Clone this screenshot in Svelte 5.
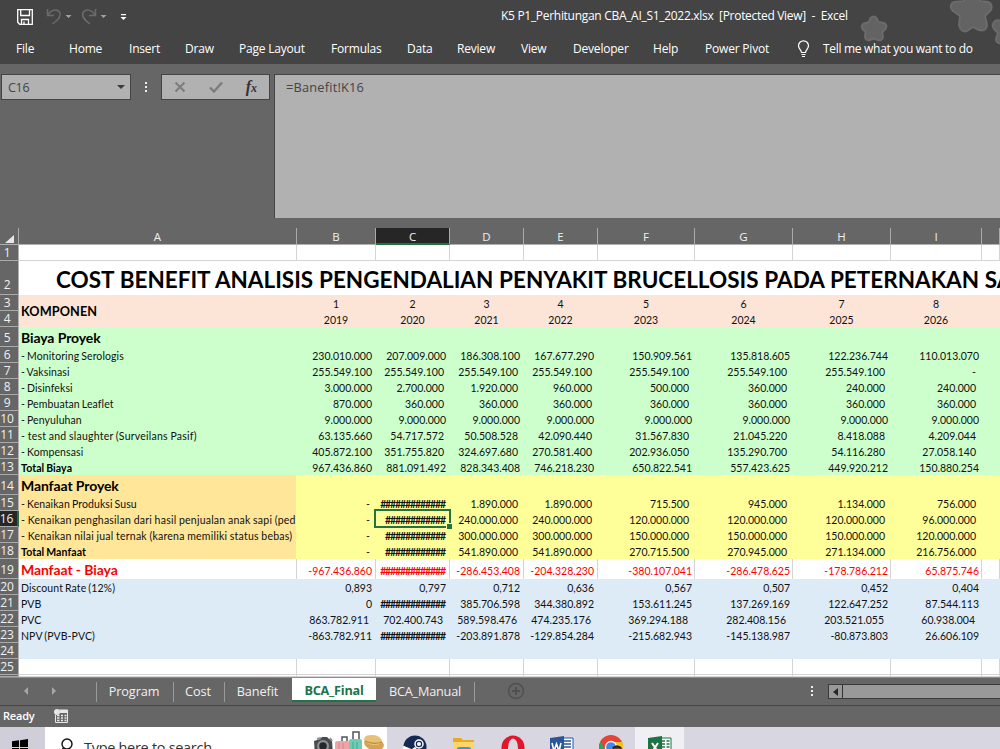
<script>
  const menu = [
    { label: 'File', width: 53 },
    { label: 'Home', width: 60 },
    { label: 'Insert', width: 56 },
    { label: 'Draw', width: 54 },
    { label: 'Page Layout', width: 92 },
    { label: 'Formulas', width: 76 },
    { label: 'Data', width: 50 },
    { label: 'Review', width: 64 },
    { label: 'View', width: 52 },
    { label: 'Developer', width: 80 },
    { label: 'Help', width: 52 },
    { label: 'Power Pivot', width: 92 },
  ];

  const columns = ['A', 'B', 'C', 'D', 'E', 'F', 'G', 'H', 'I', ''];
  const hash = '#############';
  const hash12 = '############';

  // a trailing space in a value is the blank the accounting format leaves at the right
  const rows = [
    { n: 1, h: 16, kind: 'blank' },
    { n: 2, h: 34, kind: 'title', title: 'COST BENEFIT ANALISIS PENGENDALIAN PENYAKIT BRUCELLOSIS PADA PETERNAKAN SAPI' },
    { n: 3, h: 16, kind: 'years', label: 'KOMPONEN', cells: ['1', '2', '3', '4', '5', '6', '7', '8'] },
    { n: 4, h: 16, kind: 'years', cells: ['2019', '2020', '2021', '2022', '2023', '2024', '2025', '2026'] },
    { n: 5, h: 20, kind: 'cost heading', label: 'Biaya Proyek' },
    { n: 6, h: 16, kind: 'cost', label: '- Monitoring Serologis', cells: ['230.010.000', '207.009.000', '186.308.100', '167.677.290', '150.909.561', '135.818.605', '122.236.744', '110.013.070'] },
    { n: 7, h: 16, kind: 'cost', label: '- Vaksinasi', cells: ['255.549.100', '255.549.100 ', '255.549.100 ', '255.549.100 ', '255.549.100 ', '255.549.100 ', '255.549.100 ', '- '] },
    { n: 8, h: 16, kind: 'cost', label: '- Disinfeksi', cells: ['3.000.000', '2.700.000 ', '1.920.000 ', '960.000 ', '500.000 ', '360.000 ', '240.000 ', '240.000 '] },
    { n: 9, h: 16, kind: 'cost', label: '- Pembuatan Leaflet', cells: ['870.000', '360.000 ', '360.000 ', '360.000 ', '360.000 ', '360.000 ', '360.000 ', '360.000 '] },
    { n: 10, h: 16, kind: 'cost', label: '- Penyuluhan', cells: ['9.000.000', '9.000.000', '9.000.000', '9.000.000', '9.000.000', '9.000.000', '9.000.000', '9.000.000'] },
    { n: 11, h: 16, kind: 'cost wide', label: '- test and slaughter (Surveilans Pasif)', cells: ['63.135.660', '54.717.572 ', '50.508.528 ', '42.090.440 ', '31.567.830 ', '21.045.220 ', '8.418.088 ', '4.209.044 '] },
    { n: 12, h: 16, kind: 'cost', label: '- Kompensasi', cells: ['405.872.100', '351.755.820 ', '324.697.680 ', '270.581.400 ', '202.936.050 ', '135.290.700 ', '54.116.280 ', '27.058.140 '] },
    { n: 13, h: 16, kind: 'cost total', label: 'Total Biaya', cells: ['967.436.860', '881.091.492', '828.343.408', '746.218.230', '650.822.541', '557.423.625', '449.920.212', '150.880.254'] },
    { n: 14, h: 20, kind: 'benefit heading', label: 'Manfaat Proyek' },
    { n: 15, h: 16, kind: 'benefit', label: '- Kenaikan Produksi Susu', cells: ['- ', hash, '1.890.000 ', '1.890.000 ', '715.500 ', '945.000 ', '1.134.000 ', '756.000 '] },
    { n: 16, h: 16, kind: 'benefit wide', label: '- Kenaikan penghasilan dari hasil penjualan anak sapi (ped', cells: ['- ', hash12, '240.000.000 ', '240.000.000 ', '120.000.000 ', '120.000.000 ', '120.000.000 ', '96.000.000 '] },
    { n: 17, h: 16, kind: 'benefit wide', label: '- Kenaikan nilai jual ternak (karena memiliki status bebas)', cells: ['- ', hash12, '300.000.000 ', '300.000.000 ', '150.000.000 ', '150.000.000 ', '150.000.000 ', '120.000.000 '] },
    { n: 18, h: 16, kind: 'benefit total', label: 'Total Manfaat', cells: ['- ', hash12, '541.890.000 ', '541.890.000 ', '270.715.500 ', '270.945.000 ', '271.134.000 ', '216.756.000 '] },
    { n: 19, h: 20, kind: 'net heading', label: 'Manfaat - Biaya', cells: ['-967.436.860', hash, '-286.453.408', '-204.328.230', '-380.107.041', '-286.478.625', '-178.786.212', '65.875.746'] },
    { n: 20, h: 16, kind: 'present', label: 'Discount Rate (12%)', cells: ['0,893', '0,797', '0,712', '0,636', '0,567', '0,507', '0,452', '0,404'] },
    { n: 21, h: 16, kind: 'present', label: 'PVB', cells: ['0', hash, '385.706.598', '344.380.892', '153.611.245', '137.269.169', '122.647.252', '87.544.113'] },
    { n: 22, h: 16, kind: 'present indent', label: 'PVC', cells: ['863.782.911', '702.400.743', '589.598.476', '474.235.176', '369.294.188', '282.408.156', '203.521.055', '60.938.004'] },
    { n: 23, h: 16, kind: 'present', label: 'NPV (PVB-PVC)', cells: ['-863.782.911', hash, '-203.891.878', '-129.854.284', '-215.682.943', '-145.138.987', '-80.873.803', '26.606.109'] },
    { n: 24, h: 16, kind: 'present' },
    { n: 25, h: 16, kind: 'blank' },
    { n: '', h: 2, kind: 'blank' },
  ];

  const sheets = [
    { label: 'Program', width: 77 },
    { label: 'Cost', width: 51 },
    { label: 'Banefit', width: 67 },
    { label: 'BCA_Final', width: 84 },
    { label: 'BCA_Manual', width: 99 },
  ];

  let activeSheet = $state('BCA_Final');
  let selected = $state({ row: 16, col: 2 });
</script>

<div class="window">
  <header>
    <svg class="stars" width="150" height="64" viewBox="850 0 150 64">
      <g fill="#636363" stroke="#6b6b6b" stroke-width="2" stroke-linejoin="round">
        <path d="M870.500 18Q874 15 876.500 18L878.500 22L884 23Q888 25 885.500 29L882.500 32L883 37Q882 41 878 40L874 38.500L870 40Q865.500 41 865 37L865.500 32L862.500 29Q860.500 25 864 23.500L869 22Z" />
        <path d="M963 -6L964 1L954 2Q948 5 953 11L960 16L959 25Q961 33 967 31L973 27L979 30Q986 32 987 25L985 16L991 10Q993 4 988 2L980 1L977 -6Z" />
        <path d="M1003 22Q999 19 995 21Q991 24 994 29L998 33L996 39Q996 44 1004 44Z" />
      </g>
    </svg>
    <div class="titlebar">
      <svg width="135" height="26" viewBox="0 0 135 26" fill="none">
        <path d="M17.700 9.700H32.300V24.300H19.700L17.700 22.300ZM20.700 9.700V15.500H29.500V9.700M21.500 24V19.500H28.500V24M24 21.500V24" stroke="#fff" stroke-width="1.300" />
        <path d="M47.500 9V15.500H54M48 15C51 9.500 57 8.500 59.500 12C62 16 59 19.500 52.500 24" stroke="#6b6b6b" stroke-width="1.500" />
        <path d="M95.500 9V15.500H89M95 15C92 9.500 86 8.500 83.500 12C81 16 84 19.500 90 24" stroke="#6b6b6b" stroke-width="1.500" />
        <path d="M65.500 15h6l-3 3zM100.500 15h6l-3 3z" fill="#a0a0a0" />
        <path d="M121 14h5v1.300h-5zM120.500 17h6l-3 3z" fill="#fff" />
      </svg>
      <span class="filename">K5 P1_Perhitungan CBA_AI_S1_2022.xlsx&nbsp; [Protected View]&nbsp; -&nbsp; Excel</span>
    </div>
    <nav>
      {#each menu as item}
        <span style="width: {item.width}px">{item.label}</span>
      {/each}
      <svg width="26" height="18" viewBox="0 0 26 18" fill="none" stroke="#fff" stroke-width="1.200">
        <path d="M4.500 12.500C4.500 10 1.500 9 1.500 5.800A5 5 0 0 1 11.500 5.800C11.500 9 8.500 10 8.500 12.500ZM4.500 14.500H8.500M5 16.500H8" />
      </svg>
      <span class="tell">Tell me what you want to do</span>
    </nav>
  </header>

  <section class="formula">
    <div class="namebox">
      <span>C16</span>
      <svg width="8" height="4" viewBox="0 0 8 4"><path d="M0 0h8l-4 4z" fill="#3b3b3b" /></svg>
    </div>
    <div class="dots"><i></i><i></i><i></i></div>
    <div class="tools">
      <svg width="14" height="14" viewBox="0 0 14 14" fill="none" stroke="#7c7c7c" stroke-width="2"><path d="M2.500 2.500L11.500 11.500M11.500 2.500L2.500 11.500" /></svg>
      <svg width="14" height="14" viewBox="0 0 14 14" fill="none" stroke="#7c7c7c" stroke-width="2.400"><path d="M1 7.500L5 11.500L13 2.500" /></svg>
      <em>f<small>x</small></em>
    </div>
    <div class="expression">=Banefit!K16</div>
  </section>

  <section class="sheet">
    <div class="line letters">
      <div class="corner"><svg width="10" height="9" viewBox="0 0 10 9"><path d="M9 0V8H0z" fill="#e8e8e8" /></svg></div>
      {#each columns as letter, i}
        <div class="letter" class:current={i === selected.col}>{letter}</div>
      {/each}
    </div>
    {#each rows as row}
      <div class="line {row.kind}" style="height: {row.h}px">
        <div class="number" class:current={row.n === selected.row}>{row.n}</div>
        {#if row.title}
          <div class="bigtitle">{row.title}</div>
        {:else}
          <div class="cell label" class:merged={row.n === 3}><span>{row.label ?? ''}</span></div>
          {#each columns.slice(1) as _, i}
            {@const value = row.cells?.[i] ?? ''}
            <div
              class="cell"
              class:accounting={value.endsWith(' ')}
              class:hashes={value.startsWith('#')}
            >
              {value.trim()}
              {#if row.n === selected.row && i + 1 === selected.col}
                <b class="selection"></b>
              {/if}
            </div>
          {/each}
        {/if}
      </div>
    {/each}
  </section>

  <section class="sheets">
    <div class="arrows">
      <svg width="34" height="8" viewBox="0 0 34 8" fill="#a6a6a6"><path d="M5 0v8L1 4zM29 0v8l4-4z" /></svg>
    </div>
    {#each sheets as sheet}
      <button
        class:active={sheet.label === activeSheet}
        style="width: {sheet.width}px"
        onclick={() => (activeSheet = sheet.label)}>{sheet.label}</button>
    {/each}
    <svg class="add" width="18" height="18" viewBox="0 0 18 18" fill="none" stroke="#4f4f4f" stroke-width="1.400">
      <circle cx="9" cy="9" r="7.500" /><path d="M9 5V13M5 9H13" stroke-width="2" />
    </svg>
    <div class="dots"><i></i><i></i><i></i></div>
    <div class="scroll">
      <span><svg width="5" height="8" viewBox="0 0 5 8"><path d="M5 0v8L0 4z" fill="#262626" /></svg></span>
    </div>
  </section>

  <section class="status">
    <span>Ready</span>
    <svg width="14" height="14" viewBox="0 0 14 14">
      <path d="M5 1H13.500V13.500H1.500V6" fill="none" stroke="#e6e6e6" />
      <circle cx="3" cy="3" r="3" fill="#e6e6e6" />
      <path d="M6 1h7v3H6z" fill="#e6e6e6" />
      <path d="M3 6.500h2.500M7 6.500h2M10.500 6.500h2M3 9h2.500M7 9h2M10.500 9h2M3 11.500h2.500M7 11.500h2M10.500 11.500h2" stroke="#e6e6e6" stroke-width="1.300" />
    </svg>
  </section>

  <footer>
    <div class="start">
      <svg width="17" height="17" viewBox="0 0 17 17"><path d="M0 2.300L7 1.300V8H0zM8 1.200L16 0V8H8zM0 9h7v6.700L0 14.700zM8 9h8v8l-8-1.200z" /></svg>
    </div>
    <div class="search">
      <svg width="16" height="18" viewBox="0 0 16 18" fill="none" stroke="#111" stroke-width="1.400"><circle cx="9" cy="6" r="5" /><path d="M5.500 10L1 15" /></svg>
      <span>Type here to search</span>
      <svg class="travel" width="76" height="24" viewBox="311 731 76 24">
        <path d="M314 741l6-2 2-2 5 0 2 2 3 1 1 15h-18z" fill="#474b50" />
        <path d="M317 739l4-1M330 738l2 3" stroke="#8d9299" stroke-width="2" />
        <circle cx="323" cy="746" r="6" fill="#8b9095" /><circle cx="323" cy="746" r="3.800" fill="#23282c" />
        <path d="M342 742v-5h5v5M353 740v-8h6v8" fill="none" stroke="#50545c" stroke-width="1.500" />
        <rect x="335" y="741" width="15" height="15" rx="2" fill="#eea5a8" />
        <path d="M339 743v9M343 743v9" stroke="#d98489" />
        <rect x="349" y="739" width="13" height="16" rx="2" fill="#6fcdb4" />
        <path d="M353 742v9M357 742v9" stroke="#45a88f" />
        <ellipse cx="374" cy="744" rx="10" ry="6.500" fill="#d5a44e" transform="rotate(15 374 744)" />
        <ellipse cx="373" cy="740" rx="9" ry="5" fill="#e9c176" transform="rotate(8 373 740)" />
        <path d="M365 741q8 4 17 1" fill="none" stroke="#b98a42" stroke-width="1.200" />
      </svg>
    </div>
    <div class="apps">
      <div class="app">
        <svg width="24" height="24" viewBox="0 0 24 24">
          <circle cx="12" cy="12" r="11.500" fill="#142a55" />
          <circle cx="16" cy="9" r="4" fill="none" stroke="#fff" stroke-width="1.500" /><circle cx="16" cy="9" r="2" fill="#fff" />
          <path d="M0 12l9 4 4-3" fill="none" stroke="#fff" stroke-width="3" />
        </svg>
      </div>
      <div class="app">
        <svg width="24" height="24" viewBox="0 0 24 24">
          <path d="M1 3h8l2 2h11v19H1z" fill="#e9a923" /><path d="M1 7h21v17H1z" fill="#fcd667" /><path d="M5 14q0-2 2-2h10q2 0 2 2v9H5z" fill="#3d97dc" />
        </svg>
      </div>
      <div class="app">
        <svg width="24" height="24" viewBox="0 0 24 24"><ellipse cx="12" cy="12.500" rx="11.500" ry="12" fill="#e3152b" /><ellipse cx="12" cy="13" rx="5" ry="9.500" fill="#dad8e2" /></svg>
      </div>
      <div class="app">
        <svg width="24" height="24" viewBox="0 0 24 24">
          <path d="M12 3h11v19H12z" fill="#fff" stroke="#2b579a" /><path d="M14 6h7M14 9h7M14 12h7" stroke="#2b579a" stroke-width="1.500" /><path d="M0 3l14-2v23H0z" fill="#2b579a" />
          <path d="M2 8l2 8 2.500-7L9 16l2-8" fill="none" stroke="#fff" stroke-width="1.600" />
        </svg>
      </div>
      <div class="app">
        <svg width="24" height="24" viewBox="0 0 24 24">
          <circle cx="12" cy="12" r="12" fill="#e54335" /><path d="M1.500 6.500L10 21v3A12 12 0 0 1 1.500 6.500z" fill="#34a353" /><path d="M12 7h11A12 12 0 0 1 13 24z" fill="#fbc116" />
          <circle cx="12" cy="12" r="5.500" fill="#4285f4" stroke="#fff" stroke-width="1.300" /><circle cx="18" cy="16" r="5.500" fill="#5a4b49" /><path d="M14 13q4-3 8 0" stroke="#222" stroke-width="2" fill="none" />
        </svg>
      </div>
      <div class="app open">
        <svg width="24" height="24" viewBox="0 0 24 24">
          <path d="M12 3h11v19H12z" fill="#fff" stroke="#1f7244" /><path d="M14 6h3M18.500 6h3M14 9h3M18.500 9h3M14 12h3M18.500 12h3" stroke="#1f7244" stroke-width="1.700" /><path d="M0 3l14-2v23H0z" fill="#1f7244" />
          <path d="M4 8l6 9M10 8l-6 9" fill="none" stroke="#fff" stroke-width="2" />
        </svg>
      </div>
    </div>
  </footer>
</div>

<style>
  :global(body) {
    margin: 0;
    overflow: hidden;
  }
  .window {
    width: 1000px;
    height: 749px;
    overflow: hidden;
    display: flex;
    flex-direction: column;
    background: #666;
    font-family: 'Open Sans', 'Noto Sans', sans-serif;
    font-size: 12px;
    color: #fff;
  }
  .window > * {
    flex: none;
  }

  header {
    position: relative;
    height: 64px;
    background: #444;
  }
  .stars {
    position: absolute;
    top: 0;
    right: 0;
  }
  .titlebar {
    position: relative;
    display: flex;
    height: 32px;
  }
  .filename {
    margin-left: 366px;
    line-height: 32px;
    letter-spacing: -.3px;
    white-space: nowrap;
  }
  nav {
    position: relative;
    display: flex;
    height: 32px;
    padding-left: 16px;
    line-height: 33px;
    letter-spacing: -.2px;
    white-space: nowrap;
  }
  nav span {
    flex: none;
  }
  nav svg {
    margin-top: 8px;
    flex: none;
  }
  nav .tell {
    letter-spacing: -.3px;
  }

  .formula {
    display: flex;
    align-items: flex-start;
    box-sizing: border-box;
    height: 154px;
    padding: 10px 0 0 1px;
    color: #444;
  }
  .namebox,
  .tools {
    display: flex;
    align-items: center;
    box-sizing: border-box;
    height: 26px;
    border: 1px solid #444;
    background: #b1b1b1;
  }
  .namebox {
    width: 130px;
    padding: 0 5px 0 6px;
    justify-content: space-between;
    font-size: 12.500px;
    letter-spacing: -.3px;
  }
  .dots {
    display: flex;
    flex-direction: column;
    gap: 2px;
    width: 2px;
  }
  .dots i {
    height: 2px;
    background: #eee;
  }
  .formula .dots {
    margin: 8px 14px 0 14px;
  }
  .tools {
    width: 109px;
    padding: 0 12px 0 11px;
    justify-content: space-between;
  }
  em {
    font: italic bold 16px/20px 'Liberation Serif', serif;
    color: #333;
  }
  em small {
    font-size: 12px;
  }
  .expression {
    box-sizing: border-box;
    flex: 1;
    height: 146px;
    margin-left: 4px;
    padding-left: 11px;
    border: 1px solid #444;
    border-right: 0;
    background: #b1b1b1;
    font-size: 12.800px;
    line-height: 25px;
    letter-spacing: .2px;
  }

  .sheet {
    height: 459px;
    overflow: hidden;
    font-family: Lato, 'Open Sans', sans-serif;
    font-size: 10.500px;
    color: #111;
  }
  .line {
    display: grid;
    grid-template-columns: 19px 278px 79px 74px 74px 74px 97px 98px 98px 91px 18px;
    grid-template-rows: 100%;
    background: #fff;
  }
  .letters {
    height: 27px;
    background: #666;
    color: #f0f0f0;
    font: 11.500px/18px 'Open Sans', sans-serif;
    text-align: center;
  }
  .letter,
  .corner {
    box-sizing: border-box;
    height: 16px;
    margin-top: 10px;
    border-right: 1px solid #aaa;
    box-shadow: 0 1px #b0b0b0;
  }
  .corner {
    display: flex;
    align-items: flex-end;
    justify-content: flex-end;
    padding: 0 3px 0 0;
  }
  .letter.current {
    height: 17px;
    background: #262626;
    border-bottom: 2px solid #217346;
    box-shadow: none;
  }
  .number {
    display: flex;
    align-items: flex-end;
    justify-content: center;
    box-sizing: border-box;
    padding-right: 4px;
    border-right: 1px solid #b0b0b0;
    border-bottom: 1px solid #aaa;
    background: #666;
    color: #f0f0f0;
    font: 12px/14px 'Open Sans', sans-serif;
    letter-spacing: -.2px;
    overflow: hidden;
  }
  .title .number {
    padding-bottom: 2px;
  }
  .heading .number {
    padding-bottom: 1px;
  }
  .number.current {
    background: #262626;
    border-right: 2px solid #217346;
  }
  .cell {
    position: relative;
    display: flex;
    align-items: flex-end;
    justify-content: flex-end;
    box-sizing: border-box;
    padding-right: 3px;
    line-height: 13px;
    white-space: nowrap;
    min-width: 0;
  }
  .cell:nth-child(-n + 6) {
    padding-right: 4px;
  }
  .cell.accounting {
    padding-right: 6px;
  }
  .indent .cell {
    padding-right: 7px;
  }
  .cell.hashes {
    padding-right: 5px;
    font-weight: bold;
    letter-spacing: -1.100px;
  }
  .line .cell.label {
    justify-content: flex-start;
    padding: 0 0 0 2px;
    overflow: hidden;
    letter-spacing: .1px;
    word-spacing: -.8px;
  }
  .line.wide .cell.label {
    letter-spacing: .22px;
    word-spacing: -.3px;
  }
  .blank .cell,
  .net .cell {
    border-right: 1px solid #d4d4d4;
  }
  .blank .cell {
    border-bottom: 1px solid #d4d4d4;
  }
  .bigtitle {
    grid-column: 2 / -1;
    padding-left: 37px;
    overflow: hidden;
    white-space: nowrap;
    color: #000;
    font-size: 22.500px;
    font-weight: bold;
    line-height: 38px;
    word-spacing: .3px;
  }
  .years {
    background: #fce4d6;
  }
  .line.years .cell:not(.label) {
    justify-content: center;
    padding: 0 1px 0 0;
  }
  .line.years .merged {
    overflow: visible;
    color: #000;
    font-size: 12.700px;
    font-weight: bold;
    line-height: 32px;
    align-items: flex-start;
  }
  .cost {
    background: #cfc;
  }
  .benefit {
    background: #ff9;
  }
  .benefit .label {
    margin-right: 1px;
    background: #ffe699;
  }
  .present {
    background: #ddebf7;
  }
  .net {
    color: #f00;
  }
  .line.heading .cell.label {
    font-size: 14px;
    font-weight: bold;
    line-height: 19px;
    color: #000;
    letter-spacing: -.1px;
    word-spacing: 0;
  }
  .line.net.heading .cell.label {
    color: #f00;
  }
  .net .cell:not(.label) {
    line-height: 16px;
    padding-right: 3px;
  }
  .net .cell:nth-child(n + 7) {
    padding-right: 2px;
  }
  .net .cell.hashes:not(.label) {
    padding-right: 4px;
  }
  .total .label {
    font-weight: bold;
    color: #000;
  }
  .selection {
    position: absolute;
    z-index: 1;
    top: -2px;
    left: -2px;
    right: -1px;
    bottom: -1px;
    border: 2px solid #217346;
  }
  .selection::after {
    content: '';
    position: absolute;
    right: -3px;
    bottom: -3px;
    width: 5px;
    height: 5px;
    background: #217346;
    outline: 1px solid #ff9;
  }

  .sheets {
    display: flex;
    box-sizing: border-box;
    height: 29px;
    border-top: 1px solid #8c8c8c;
    border-bottom: 1px solid #444;
  }
  .arrows {
    box-sizing: border-box;
    width: 97px;
    padding: 5px 0 0 23px;
    border-right: 1px solid #999;
    height: 20px;
    margin-top: 4px;
    line-height: 0;
  }
  button {
    box-sizing: border-box;
    height: 20px;
    margin: 4px 0 0;
    padding: 0 2px 2px 0;
    border: 0;
    border-right: 1px solid #999;
    background: none;
    color: #f0f0f0;
    font: 12.700px/18px 'Open Sans', sans-serif;
    letter-spacing: -.1px;
    white-space: nowrap;
  }
  button:nth-of-type(3) {
    border-right: 0;
  }
  button:nth-of-type(5) {
    padding-right: 0;
    letter-spacing: -.2px;
  }
  button.active {
    height: 24px;
    margin: 0;
    padding: 2px 0 0;
    border: 0;
    border-bottom: 2px solid #217346;
    background: #fff;
    color: #217346;
    font-weight: bold;
    letter-spacing: -.250px;
  }
  .add {
    margin: 4px 0 0 32px;
  }
  .sheets .dots {
    margin: 8px 15px 0 286px;
  }
  .scroll {
    box-sizing: border-box;
    flex: 1;
    height: 15px;
    margin: 6px 0 0;
    border: 1px solid #3a3a3a;
    border-right: 0;
    background: #999;
  }
  .scroll span {
    display: flex;
    align-items: center;
    justify-content: center;
    width: 13px;
    height: 13px;
    border-right: 1px solid #333;
  }

  .status {
    display: flex;
    height: 21px;
    padding-left: 3px;
    font-size: 11px;
    font-weight: 600;
    line-height: 20px;
    letter-spacing: -.2px;
  }
  .status span {
    width: 51px;
  }
  .status svg {
    margin-top: 3px;
  }

  footer {
    display: flex;
    height: 22px;
    overflow: hidden;
    background: #d8d6e1;
    color: #333;
  }
  .start {
    width: 33px;
    padding: 12px 0 0 12px;
    background: #d0ced9;
  }
  .search {
    display: flex;
    box-sizing: border-box;
    width: 342px;
    padding-left: 13px;
    background: #fff;
    font-size: 14.500px;
    white-space: nowrap;
  }
  .search svg {
    margin-top: 11px;
    flex: none;
  }
  .search span {
    width: 227px;
    margin-left: 10px;
    line-height: 41px;
    letter-spacing: -.3px;
  }
  .search .travel {
    margin: 4px 0 0;
  }
  .apps {
    display: flex;
    padding-left: 3px;
  }
  .app {
    display: flex;
    justify-content: center;
    width: 49px;
    padding-top: 8px;
  }
  .app.open {
    background: #f0eff4;
  }
</style>
